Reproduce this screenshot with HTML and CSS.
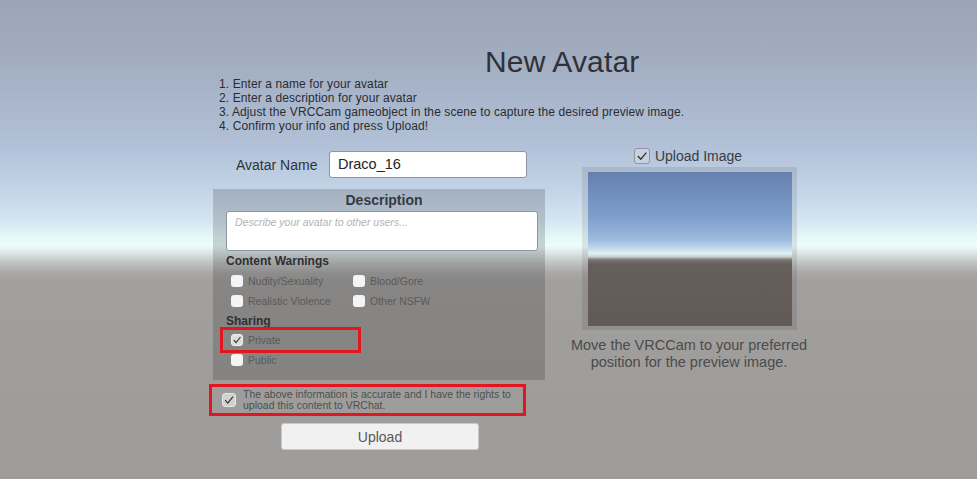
FILE: index.html
```html
<!DOCTYPE html>
<html>
<head>
<meta charset="utf-8">
<title>New Avatar</title>
<link rel="stylesheet" href="styles.css">
</head>
<body>
<div class="screen">
  <h1 class="title">New Avatar</h1>
  <div class="content">
    <div class="left">
      <div class="steps">
        <div>1. Enter a name for your avatar</div>
        <div>2. Enter a description for your avatar</div>
        <div>3. Adjust the VRCCam gameobject in the scene to capture the desired preview image.</div>
        <div>4. Confirm your info and press Upload!</div>
      </div>
      <div class="name-row">
        <span class="name-label">Avatar Name</span>
        <div class="name-input">Draco_16</div>
      </div>
      <div class="panel">
        <div class="panel-title">Description</div>
        <div class="desc-box">Describe your avatar to other users...</div>
        <div class="section-title">Content Warnings</div>
        <div class="check-grid">
          <div class="check-row"><span class="box"></span><span class="lbl">Nudity/Sexuality</span></div>
          <div class="check-row"><span class="box"></span><span class="lbl">Blood/Gore</span></div>
          <div class="check-row"><span class="box"></span><span class="lbl">Realistic Violence</span></div>
          <div class="check-row"><span class="box"></span><span class="lbl">Other NSFW</span></div>
        </div>
        <div class="section-title sharing">Sharing</div>
        <div class="check-row private">
          <span class="box checked"><svg viewBox="0 0 12 12" width="12" height="12"><polyline points="2.2,6.2 4.8,9.2 10.2,2.4" fill="none" stroke="#333" stroke-width="1.4"/></svg></span><span class="lbl">Private</span>
        </div>
        <div class="check-row"><span class="box"></span><span class="lbl">Public</span></div>
      </div>
      <div class="consent">
        <span class="box big checked"><svg viewBox="0 0 14 14" width="14" height="14"><polyline points="2.6,7.2 5.6,10.6 11.7,3" fill="none" stroke="#333" stroke-width="1.4"/></svg></span>
        <span class="consent-text">The above information is accurate and I have the rights to upload this content to VRChat.</span>
      </div>
      <button class="upload-btn">Upload</button>
    </div>
    <div class="right">
      <div class="upload-toggle">
        <span class="img-box"><svg viewBox="0 0 16 16" width="16" height="16"><polyline points="3.2,8 6.6,11.6 12.9,4.2" fill="none" stroke="#2d3138" stroke-width="1.5"/></svg></span>
        <span class="upload-label">Upload Image</span>
      </div>
      <div class="frame"><div class="preview"></div></div>
      <div class="caption">Move the VRCCam to your preferred position for the preview image.</div>
    </div>
  </div>
</div>
</body>
</html>
```

FILE: styles.css
```css
html, body {
  margin: 0;
  padding: 0;
}
body {
  font-family: "Liberation Sans", Arial, sans-serif;
}
.screen {
  width: 977px;
  height: 479px;
  overflow: hidden;
  box-sizing: border-box;
  padding-top: 46px;
  background: linear-gradient(to bottom,
    #9aa5b8 0px,
    #a0abbe 50px,
    #a9b6cb 100px,
    #b3c2d9 150px,
    #bacadf 167px,
    #c8d9eb 200px,
    #d6e7f2 222px,
    #e5f7f8 236px,
    #ecfdfc 246px,
    #dce6e5 253px,
    #bfc3c2 263px,
    #a9a8a7 273px,
    #a2a09f 282px,
    #9f9e9c 340px,
    #9d9c9a 479px);
}
.title {
  margin: 0 0 0 485px;
  font-size: 30px;
  line-height: 31px;
  font-weight: normal;
  color: #2f3136;
  white-space: nowrap;
  letter-spacing: 0.15px;
}
.content {
  display: flex;
  align-items: flex-start;
  padding-left: 209px;
}
.left {
  width: 360px;
  flex: none;
}
.steps {
  margin-left: 10px;
  font-size: 12px;
  line-height: 14px;
  color: #2a2c30;
  white-space: nowrap;
  letter-spacing: 0.1px;
}
.name-row {
  margin-top: 18px;
  height: 27px;
  display: flex;
  align-items: center;
}
.name-label {
  width: 93px;
  padding-left: 27px;
  font-size: 14px;
  color: #30343a;
  white-space: nowrap;
}
.name-input {
  width: 198px;
  height: 27px;
  box-sizing: border-box;
  background: #ffffff;
  border: 1px solid #8c96a6;
  border-radius: 3px;
  padding-left: 8px;
  font-size: 14.5px;
  line-height: 25px;
  color: #242424;
}
.panel {
  margin-top: 11px;
  margin-left: 4px;
  width: 332px;
  box-sizing: border-box;
  padding: 0 7px 10px 13px;
  background: rgba(0, 0, 0, 0.16);
}
.panel-title {
  height: 22px;
  line-height: 22px;
  text-align: center;
  font-size: 14px;
  font-weight: bold;
  color: #343a44;
  padding-left: 4px;
}
.desc-box {
  height: 40px;
  box-sizing: border-box;
  background: #ffffff;
  border: 1px solid #8d95a0;
  border-radius: 3px;
  padding: 4px 0 0 8px;
  font-size: 10.5px;
  line-height: 12px;
  font-style: italic;
  color: #b3b3b3;
}
.section-title {
  margin-top: 2px;
  height: 16px;
  line-height: 16px;
  font-size: 12px;
  font-weight: bold;
  color: #2e3033;
}
.check-grid {
  margin-top: 2px;
  display: grid;
  grid-template-columns: 122px 1fr;
}
.check-row {
  height: 20px;
  display: flex;
  align-items: center;
  padding-left: 5px;
}
.box {
  width: 12px;
  height: 12px;
  flex: none;
  box-sizing: border-box;
  border-radius: 3px;
  background: #f4f4f4;
  display: flex;
  align-items: center;
  justify-content: center;
}
.box svg {
  display: block;
}
.box.checked {
  background: #dedede;
  border: 1px solid #efefef;
}
.box.big {
  width: 14px;
  height: 14px;
  background: #d2d1d0;
  border: 1px solid #e4e4e4;
}
.lbl {
  margin-left: 5px;
  font-size: 10.5px;
  color: #5a5a5a;
  white-space: nowrap;
}
.sharing {
  margin-top: 2px;
}
.private {
  margin-top: 1px;
  margin-left: -3px;
  padding-left: 8px;
  width: 135px;
  box-sizing: border-box;
  outline: 3px solid #e3151f;
  outline-offset: -0.5px;
}
.consent {
  margin-top: 4px;
  width: 317px;
  height: 32px;
  box-sizing: border-box;
  border: 3px solid #e3151f;
  display: flex;
  align-items: center;
  padding-left: 10px;
}
.consent-text {
  margin-left: 7px;
  width: 276px;
  font-size: 10.5px;
  line-height: 11px;
  color: #4e4e4e;
}
.upload-btn {
  display: block;
  margin: 7px 0 0 72px;
  width: 198px;
  height: 27px;
  padding: 0;
  border: 1px solid #c8c8c8;
  border-radius: 3px;
  background: #f1f1f1;
  font-family: "Liberation Sans", Arial, sans-serif;
  font-size: 14px;
  color: #585858;
}
.right {
  margin-top: 70px;
  width: 240px;
  flex: none;
  display: flex;
  flex-direction: column;
  align-items: center;
}
.upload-toggle {
  height: 17px;
  display: flex;
  align-items: center;
  padding-right: 2px;
}
.img-box {
  width: 16px;
  height: 16px;
  box-sizing: border-box;
  border: 1px solid #8f96a1;
  border-radius: 3px;
  background: #c9d1dc;
  display: flex;
  align-items: center;
  justify-content: center;
}
.img-box svg {
  display: block;
}
.upload-label {
  margin-left: 5px;
  font-size: 14px;
  color: #383d45;
  white-space: nowrap;
}
.frame {
  margin-top: 3px;
  width: 215px;
  height: 163px;
  box-sizing: border-box;
  padding: 5px 5px 4px 6px;
  background: rgba(0, 0, 0, 0.09);
}
.preview {
  width: 204px;
  height: 154px;
  background: linear-gradient(to bottom,
    #6580ad 0%,
    #7190bf 15%,
    #819fcb 30%,
    #9cbbdf 44%,
    #c4dcec 50%,
    #e1f0f1 53%,
    #c9d1d2 55%,
    #7c7672 57%,
    #655e5b 60%,
    #625a57 100%);
}
.caption {
  margin-top: 7px;
  width: 240px;
  text-align: center;
  font-size: 14.5px;
  line-height: 16.5px;
  color: #4b4b4b;
}
```
